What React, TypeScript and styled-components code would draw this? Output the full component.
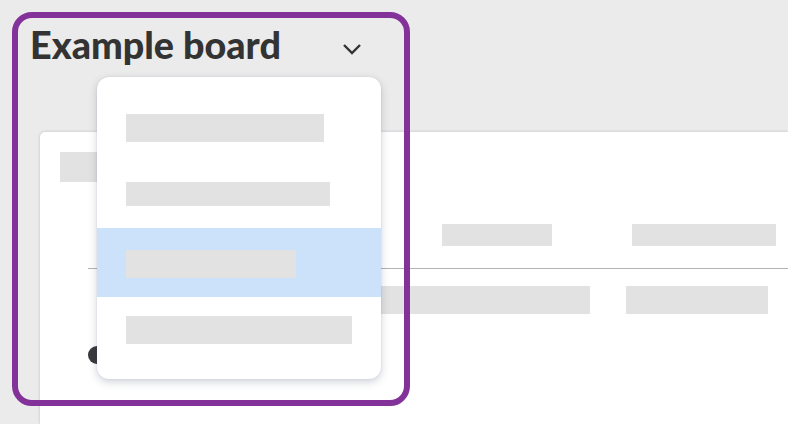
import React from "react";
import styled, { createGlobalStyle } from "styled-components";

const Global = createGlobalStyle`
  html, body { margin: 0; padding: 0; }
  body { background: #ebebeb; font-family: "Lato", "Liberation Sans", sans-serif; }
`;

const Page = styled.div`
  position: relative;
  width: 788px;
  height: 424px;
  overflow: hidden;
  background: #ebebeb;
  display: flex;
  flex-direction: column;
`;

const Header = styled.div`
  display: flex;
  align-items: flex-start;
  height: 94px;
  padding: 26px 0 0 30px;
  box-sizing: border-box;
`;

const Title = styled.h1`
  margin: 0;
  font-family: "Lato", "Liberation Sans", sans-serif;
  font-weight: 900;
  font-size: 37.7px;
  line-height: 1;
  color: #333333;
  white-space: nowrap;
`;

const Chevron = styled.svg`
  flex: none;
  margin-left: 61px;
  margin-top: 17px;
`;

const Card = styled.div`
  margin-top: 38px;
  margin-left: 40px;
  flex: 1;
  background: #ffffff;
  border-top-left-radius: 5px;
  box-shadow: 0 0 3px rgba(60, 60, 90, 0.25);
  padding: 20px 0 0 20px;
  display: flex;
  flex-direction: column;
`;

const Block = styled.div<{ w: number; h: number; ml?: number }>`
  width: ${(p) => p.w}px;
  height: ${(p) => p.h}px;
  margin-left: ${(p) => p.ml ?? 0}px;
  background: #e2e2e2;
`;

const Table = styled.div`
  margin-top: 42px;
  margin-left: 28px;
  display: flex;
  flex-direction: column;
`;

const Row = styled.div<{ head?: boolean }>`
  display: grid;
  grid-template-columns: 292px 246px 1fr;
  padding: ${(p) => (p.head ? "0 0 22px" : "17px 0 0")};
  border-bottom: ${(p) => (p.head ? "1px solid #b3b3b3" : "none")};
`;

const Cell = styled.div``;

const Dot = styled.div`
  margin-top: 32px;
  width: 18px;
  height: 18px;
  border-radius: 50%;
  background: #3a3a3e;
`;

const Focus = styled.div`
  position: absolute;
  left: 12px;
  top: 12px;
  width: 398px;
  height: 394px;
  box-sizing: border-box;
  border: 6px solid #83329a;
  border-radius: 20px;
  pointer-events: none;
`;

const Menu = styled.div`
  position: absolute;
  left: 97px;
  top: 77px;
  width: 284px;
  box-sizing: border-box;
  padding: 13px 0;
  background: #ffffff;
  border-radius: 12px;
  box-shadow: 0 3px 8px rgba(40, 50, 90, 0.22), 0 0 2px rgba(40, 50, 90, 0.12);
  display: flex;
  flex-direction: column;
`;

const Item = styled.div<{ active?: boolean; pt: number }>`
  height: 69px;
  box-sizing: border-box;
  padding: ${(p) => p.pt}px 0 0 29px;
  background: ${(p) => (p.active ? "#cce1fa" : "transparent")};
`;

const items = [
  { w: 198, h: 28, pt: 24 },
  { w: 204, h: 24, pt: 23 },
  { w: 170, h: 28, pt: 22, active: true },
  { w: 226, h: 28, pt: 19 },
];

export default function App() {
  return (
    <>
      <Global />
      <Page>
        <Header>
          <Title>Example board</Title>
          <Chevron width="20" height="12" viewBox="0 0 20 12">
            <path d="M2 2 L10 10 L18 2" fill="none" stroke="#333" strokeWidth="2.4" />
          </Chevron>
        </Header>
        <Card>
          <Block w={40} h={30} />
          <Table>
            <Row head>
              <Cell />
              <Cell>
                <Block w={110} h={22} ml={62} />
              </Cell>
              <Cell>
                <Block w={144} h={22} ml={6} />
              </Cell>
            </Row>
            <Row>
              <Cell />
              <Cell>
                <Block w={210} h={28} />
              </Cell>
              <Cell>
                <Block w={142} h={28} />
              </Cell>
            </Row>
            <Dot />
          </Table>
        </Card>
        <Focus />
        <Menu>
          {items.map((it, i) => (
            <Item key={i} active={it.active} pt={it.pt}>
              <Block w={it.w} h={it.h} />
            </Item>
          ))}
        </Menu>
      </Page>
    </>
  );
}
